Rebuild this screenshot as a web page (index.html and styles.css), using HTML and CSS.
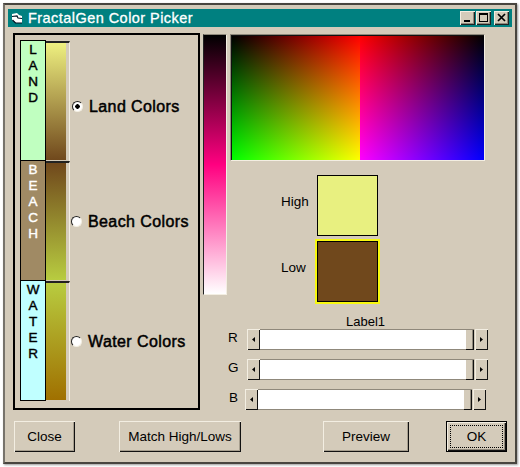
FILE: index.html
```
<!DOCTYPE html>
<html lang="en">
<head>
  <meta charset="UTF-8" />
  <title>FractalGen Color Picker</title>
  <link rel="stylesheet" href="styles.css">
</head>
<body>
  <div class="window">
    <div class="titlebar">
      <svg class="app-icon" width="12" height="12" viewBox="0 0 12 12">
        <path d="M0 2l5-1 2 2 3 1v7H4L0 8z" fill="#fff"/>
        <path d="M0 4.5l5-.5 1 2 4 .5M.5 8l3 3H10" fill="none" stroke="#012" stroke-width="1.2"/>
      </svg>
      <span class="title">FractalGen Color Picker</span>
      <div class="controls">
        <button class="control"><svg width="15" height="14"><path d="M4 9h6v2H4z"/></svg></button>
        <button class="control"><svg width="15" height="14"><path d="M3 2h9v9H3zM4 4v6h7V4z" fill-rule="evenodd"/></svg></button>
        <button class="control close"><svg width="15" height="14"><path d="M4 3l7 7M11 3l-7 7" stroke="#000" stroke-width="1.7"/></svg></button>
      </div>
    </div>

    <div class="main">
      <div class="ranges">
        <div class="range">
          <div class="tag land"><span>L</span><span>A</span><span>N</span><span>D</span></div>
          <div class="strip land-strip"></div>
          <label class="option land-option"><i class="radio checked"></i><span class="option-text">Land Colors</span></label>
        </div>
        <div class="range">
          <div class="tag beach"><span>B</span><span>E</span><span>A</span><span>C</span><span>H</span></div>
          <div class="strip beach-strip"></div>
          <label class="option beach-option"><i class="radio"></i><span class="option-text">Beach Colors</span></label>
        </div>
        <div class="range">
          <div class="tag water"><span>W</span><span>A</span><span>T</span><span>E</span><span>R</span></div>
          <div class="strip water-strip"></div>
          <label class="option water-option"><i class="radio"></i><span class="option-text">Water Colors</span></label>
        </div>
      </div>

      <div class="shade"></div>

      <div class="picker">
        <div class="spectrum">
          <div class="red-green"></div>
          <div class="red-blue"></div>
        </div>
        <div class="swatches">
          <span class="high-label">High</span><div class="swatch high"></div>
          <span class="low-label">Low</span><div class="swatch low"></div>
        </div>
        <div class="caption">Label1</div>
        <div class="sliders">
          <div class="slider">
            <span class="channel">R</span>
            <button class="arrow"><svg width="3" height="5"><path d="M3 0v5L0 2.5z"/></svg></button>
            <div class="track"><div class="thumb"></div></div>
            <button class="arrow"><svg width="3" height="5"><path d="M0 0v5l3-2.5z"/></svg></button>
          </div>
          <div class="slider">
            <span class="channel">G</span>
            <button class="arrow"><svg width="3" height="5"><path d="M3 0v5L0 2.5z"/></svg></button>
            <div class="track"><div class="thumb"></div></div>
            <button class="arrow"><svg width="3" height="5"><path d="M0 0v5l3-2.5z"/></svg></button>
          </div>
          <div class="slider blue">
            <span class="channel">B</span>
            <button class="arrow"><svg width="3" height="5"><path d="M3 0v5L0 2.5z"/></svg></button>
            <div class="track"><div class="thumb"></div></div>
            <button class="arrow"><svg width="3" height="5"><path d="M0 0v5l3-2.5z"/></svg></button>
          </div>
        </div>
      </div>
    </div>

    <div class="footer">
      <button class="btn btn-close">Close</button>
      <button class="btn btn-match">Match High/Lows</button>
      <button class="btn btn-preview">Preview</button>
      <button class="btn btn-ok"><span class="focus">OK</span></button>
    </div>
  </div>
</body>
</html>
```
FILE: styles.css
```
* {
  box-sizing: border-box;
}

body {
  margin: 0;
  padding: 3px;
  height: 467px;
  background-color: #fff;
  font-family: "Liberation Sans", Arial, sans-serif;
  font-size: 13.5px;
  color: #000;
  overflow: hidden;
}

button {
  font: inherit;
  color: inherit;
  padding: 0;
  border: none;
  background-color: #d4cbba;
}

svg {
  display: block;
}

.window {
  width: 514px;
  height: 461px;
  padding: 4px 3px 0;
  background-color: #d4cbba;
  border: 2px solid #48453f;
  border-left-color: #77736b;
  box-shadow: 1px 1px 2px #999;
}

.titlebar {
  display: flex;
  align-items: center;
  height: 18px;
  padding: 0 3px 0 4px;
  background-color: #008080;
}

.title {
  flex: 1;
  margin-left: 4px;
  color: #fff;
  font-size: 14.5px;
  letter-spacing: 0.45px;
  -webkit-text-stroke: 0.3px #fff;
}

.controls {
  display: flex;
  gap: 1px;
}

.control {
  width: 15px;
  height: 14px;
  box-shadow: inset 1px 1px #f3eee2, inset -1px -1px #222, inset -2px -2px #8f887b;
}

.control.close {
  margin-left: 2px;
}

.main {
  display: flex;
  align-items: flex-start;
  gap: 3px;
  padding: 6px 0 0 5px;
}

.ranges {
  width: 187px;
  height: 377px;
  padding: 5px;
  border: 2px solid #000;
}

.range {
  display: flex;
  height: 120px;
}

.tag {
  display: flex;
  flex-direction: column;
  align-items: center;
  width: 26px;
  height: 121px;
  padding-top: 1px;
  border: 1px solid #000;
  line-height: 16px;
  -webkit-text-stroke: 0.4px;
}

.land {
  background-color: #c0ffc0;
}

.beach {
  background-color: #a08a64;
  color: #fff;
}

.water {
  background-color: #c0ffff;
}

.strip {
  width: 24px;
  height: 120px;
  margin-top: 1px;
  border-top: 2px solid #222;
  border-right: 1px solid #f3eee2;
  background-repeat: no-repeat;
  background-size: 20px 117px;
}

.land-strip {
  background-image: linear-gradient(#eef080, #70481c);
}

.beach-strip {
  background-image: linear-gradient(#70481c, #b8cc40);
}

.water-strip {
  background-image: linear-gradient(#b8cc40, #a07000);
}

.option {
  display: flex;
  align-items: center;
  height: 20px;
}

.land-option {
  margin: 56px 0 0 2px;
}

.beach-option,
.water-option {
  margin: 51px 0 0 1px;
}

.radio {
  width: 11px;
  height: 11px;
  border: 1px solid;
  border-color: #222 #f3eee2 #f3eee2 #222;
  border-radius: 50%;
  background-color: #fff;
}

.radio.checked {
  background-image: radial-gradient(circle, #000 2px, transparent 2.5px);
}

.option-text {
  margin: 1px 0 0 6px;
  font-size: 16px;
  letter-spacing: 0.4px;
  white-space: nowrap;
  -webkit-text-stroke: 0.5px;
}

.shade {
  width: 24px;
  height: 261px;
  margin-top: 1px;
  border: 1px solid;
  border-color: #8f887b #f3eee2 #f3eee2 #222;
  background: linear-gradient(#000, #ff0080 50%, #fff);
}

.picker {
  padding-top: 1px;
}

.spectrum {
  display: flex;
  width: 255px;
  height: 127px;
  padding: 1px 0 0 1px;
  border: 1px solid;
  border-color: #8f887b #f3eee2 #f3eee2 #8f887b;
  background-color: #111;
}

.red-green {
  width: 128px;
  background: linear-gradient(90deg, #000, #f00), linear-gradient(#000, #0f0);
  background-blend-mode: screen;
}

.red-blue {
  flex: 1;
  background: linear-gradient(90deg, #f00, #000), linear-gradient(#000, #00f);
  background-blend-mode: screen;
}

.swatches {
  display: grid;
  grid-template-columns: 36px 61px;
  row-gap: 5px;
  margin: 14px 0 0 51px;
}

.high-label {
  padding-top: 19px;
}

.low-label {
  padding-top: 19px;
}

.swatch {
  height: 61px;
  border: 1px solid #000;
}

.high {
  background-color: #e8f080;
}

.low {
  background-color: #70481c;
  box-shadow: 0 0 0 2px #f8f810;
}

.caption {
  margin: 12px 0 0 116px;
  height: 15px;
  font-size: 13px;
  line-height: 15px;
}

.sliders {
  display: flex;
  flex-direction: column;
  gap: 9px;
}

.slider {
  display: flex;
  width: 258px;
  height: 21px;
}

.channel {
  width: 19px;
  margin-left: -2px;
  padding-top: 1px;
}

.slider.blue {
  width: 256px;
}

.blue .channel {
  width: 16px;
  margin-left: -1px;
}

.arrow {
  display: flex;
  align-items: center;
  justify-content: center;
  width: 13px;
  box-shadow: inset 1px 1px #f3eee2, inset -1px -1px #111;
}

.track {
  flex: 1;
  display: flex;
  justify-content: flex-end;
  margin-right: 1px;
  border-top: 1px solid #8f887b;
  border-bottom: 1px solid #8f887b;
  background-color: #fff;
}

.thumb {
  width: 8px;
  background-color: #d4cbba;
  box-shadow: inset -1px 0 #111, inset -2px 0 #8f887b, 0 1px #111;
}

.footer {
  display: flex;
  padding: 11px 0 0 6px;
}

.btn {
  height: 31px;
  box-shadow: inset 1px 1px #f3eee2, inset -1px -1px #111, inset -2px -2px #a69e8e;
}

.btn-close {
  width: 61px;
}

.btn-match {
  width: 122px;
  margin-left: 44px;
}

.btn-preview {
  width: 86px;
  margin-left: 82px;
}

.btn-ok {
  width: 61px;
  margin-left: 37px;
  padding: 4px;
  border: 1px solid #000;
  box-shadow: inset 1px 1px #f3eee2, inset -1px -1px #111, inset -2px -2px #8f887b;
}

.focus {
  display: block;
  height: 23px;
  margin: -1px;
  line-height: 21px;
  border: 1px dotted #000;
}
```
